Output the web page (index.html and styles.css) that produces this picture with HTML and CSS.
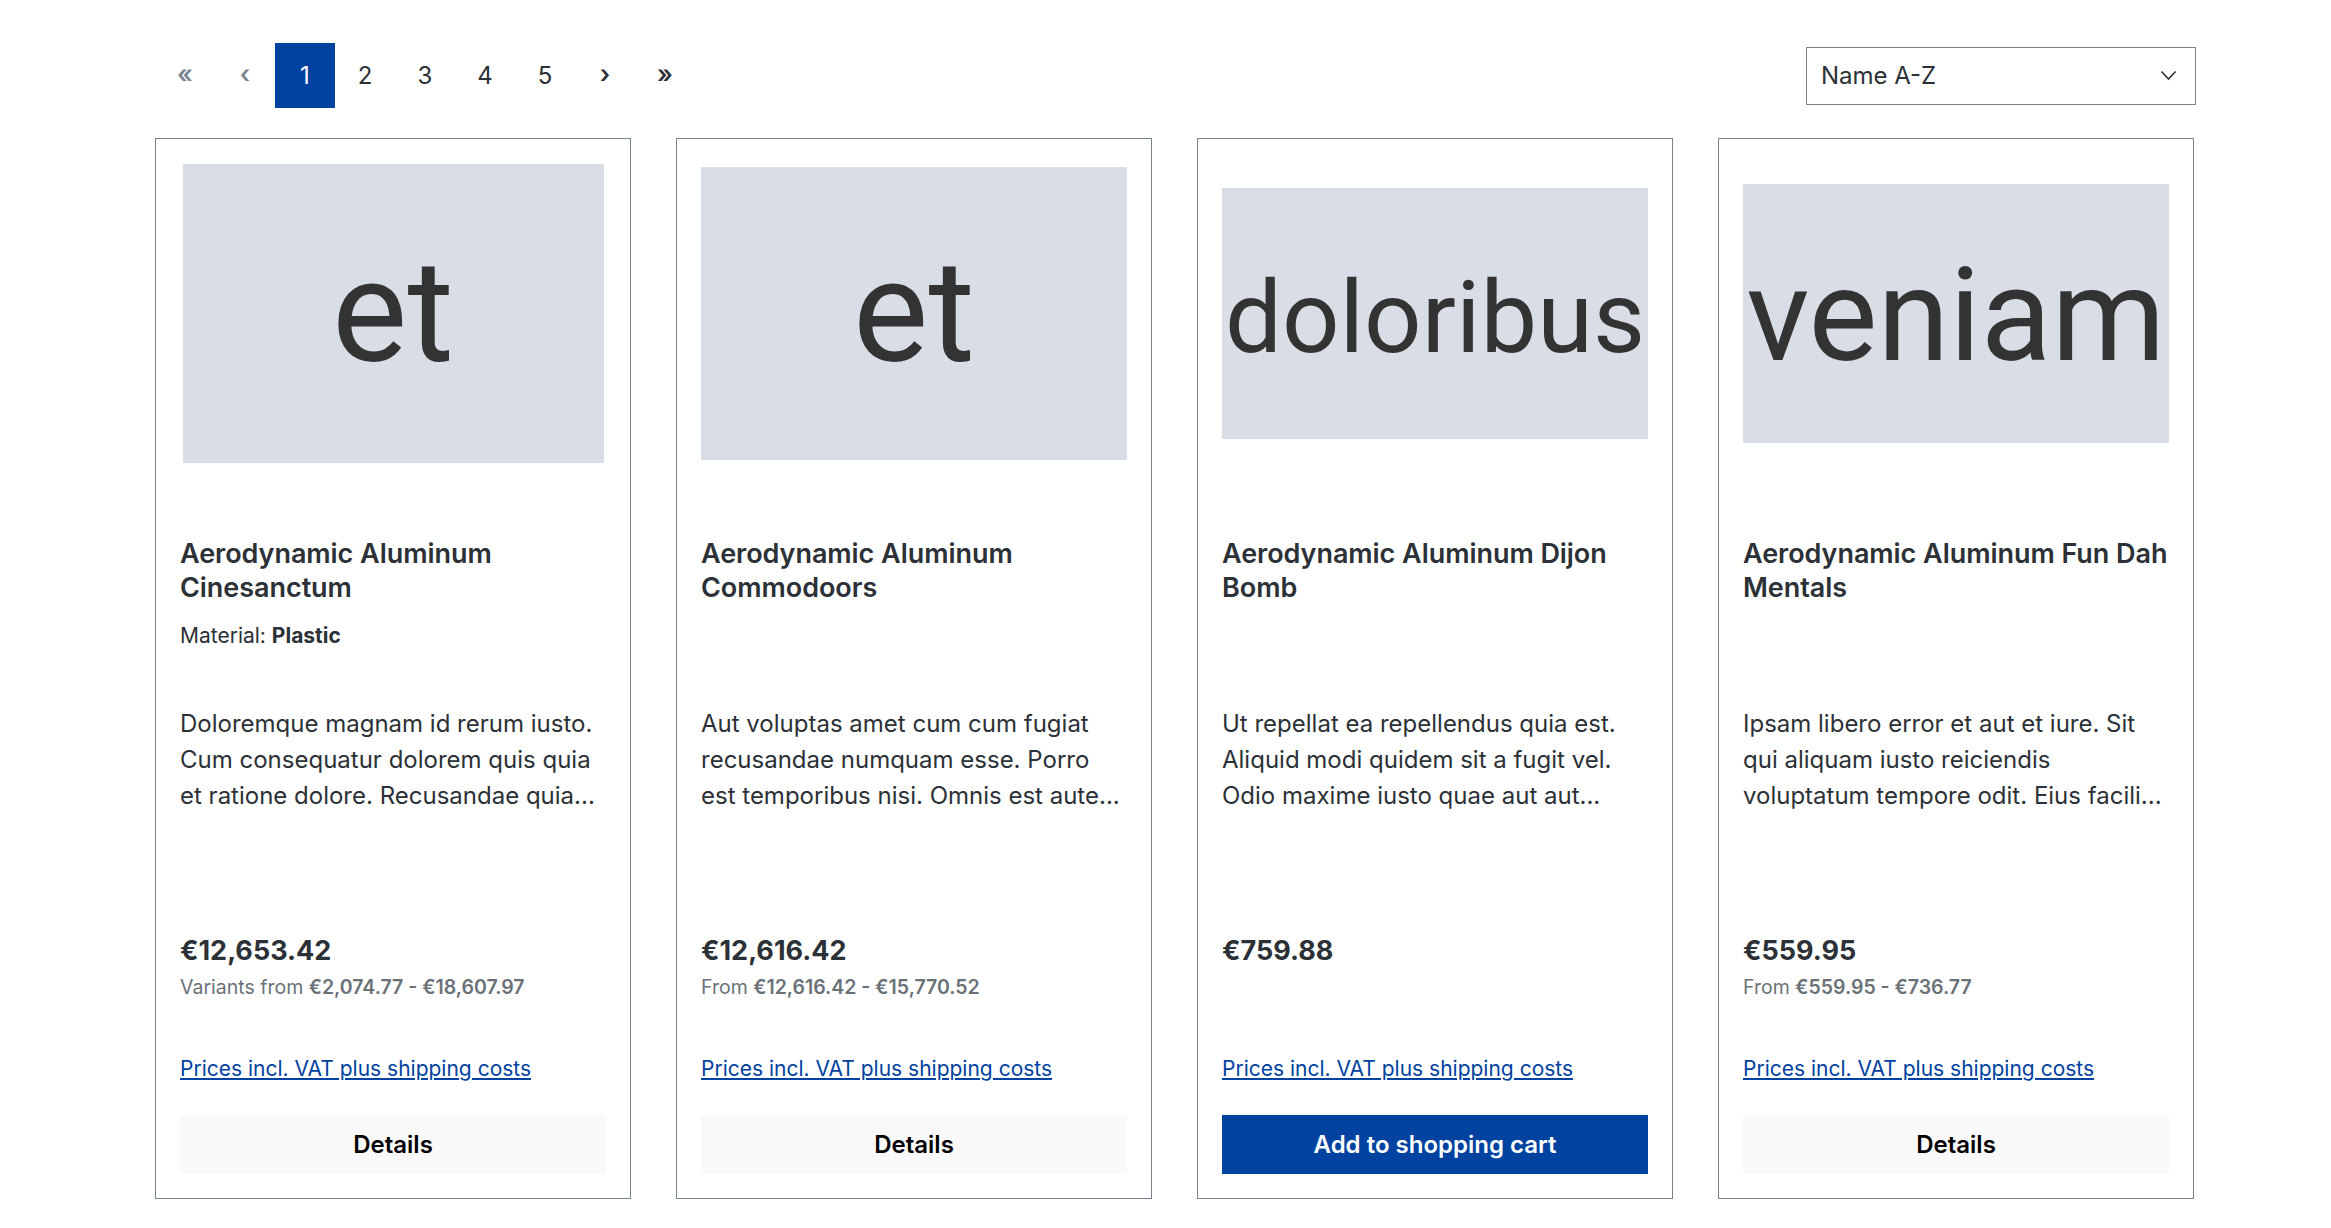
FILE: index.html
```html
<!DOCTYPE html>
<html lang="en">
<head>
<meta charset="utf-8">
<title>Product listing</title>
<link rel="stylesheet" href="styles.css">
</head>
<body>
<div class="page">
  <div class="toolbar">
    <nav class="pagination">
      <span class="pg pg-arrow pg-disabled">«</span>
      <span class="pg pg-arrow pg-disabled">‹</span>
      <span class="pg pg-active">1</span>
      <span class="pg">2</span>
      <span class="pg">3</span>
      <span class="pg">4</span>
      <span class="pg">5</span>
      <span class="pg pg-arrow">›</span>
      <span class="pg pg-arrow">»</span>
    </nav>
    <div class="sort">
      <span class="sort-label">Name A-Z</span>
      <svg class="sort-chevron" width="17" height="11" viewBox="0 0 17 11"><polyline points="1.5,1.5 8.5,9 15.5,1.5" fill="none" stroke="#2b3136" stroke-width="1.6"/></svg>
    </div>
  </div>

  <div class="grid">
    <div class="card">
      <div class="img-wrap"><div class="img img-1">et</div></div>
      <div class="name">Aerodynamic Aluminum Cinesanctum</div>
      <div class="chars"><div class="char-line">Material: <b>Plastic</b></div></div>
      <div class="desc">Doloremque magnam id rerum iusto. Cum consequatur dolorem quis quia et ratione dolore. Recusandae quia...</div>
      <div class="price-block">
        <div class="price">€12,653.42</div>
        <div class="variants">Variants from <b>€2,074.77 - €18,607.97</b></div>
      </div>
      <a class="vat" href="#">Prices incl. VAT plus shipping costs</a>
      <div class="btn btn-light">Details</div>
    </div>

    <div class="card">
      <div class="img-wrap"><div class="img img-2">et</div></div>
      <div class="name">Aerodynamic Aluminum Commodoors</div>
      <div class="chars"></div>
      <div class="desc">Aut voluptas amet cum cum fugiat recusandae numquam esse. Porro est temporibus nisi. Omnis est aute...</div>
      <div class="price-block">
        <div class="price">€12,616.42</div>
        <div class="variants">From <b>€12,616.42 - €15,770.52</b></div>
      </div>
      <a class="vat" href="#">Prices incl. VAT plus shipping costs</a>
      <div class="btn btn-light">Details</div>
    </div>

    <div class="card">
      <div class="img-wrap"><div class="img img-3">doloribus</div></div>
      <div class="name">Aerodynamic Aluminum Dijon Bomb</div>
      <div class="chars"></div>
      <div class="desc">Ut repellat ea repellendus quia est. Aliquid modi quidem sit a fugit vel. Odio maxime iusto quae aut aut...</div>
      <div class="price-block">
        <div class="price">€759.88</div>
      </div>
      <a class="vat" href="#">Prices incl. VAT plus shipping costs</a>
      <div class="btn btn-primary">Add to shopping cart</div>
    </div>

    <div class="card">
      <div class="img-wrap"><div class="img img-4">veniam</div></div>
      <div class="name">Aerodynamic Aluminum Fun Dah Mentals</div>
      <div class="chars"></div>
      <div class="desc">Ipsam libero error et aut et iure. Sit qui aliquam iusto reiciendis voluptatum tempore odit. Eius facili...</div>
      <div class="price-block">
        <div class="price">€559.95</div>
        <div class="variants">From <b>€559.95 - €736.77</b></div>
      </div>
      <a class="vat" href="#">Prices incl. VAT plus shipping costs</a>
      <div class="btn btn-light">Details</div>
    </div>
  </div>
</div>
</body>
</html>
```

FILE: styles.css
```css
* { box-sizing: border-box; }

html, body {
  margin: 0;
  padding: 0;
  background: #ffffff;
}

body {
  font-family: Inter, "Noto Sans", "Liberation Sans", sans-serif;
  color: #2b3136;
}

.page {
  width: 2196px;
  padding-left: 155px;
  padding-top: 43px;
}

/* Toolbar */
.toolbar {
  display: flex;
  align-items: center;
  justify-content: space-between;
  height: 65px;
}

.pagination {
  display: flex;
  height: 65px;
}

.pg {
  width: 60px;
  height: 65px;
  display: flex;
  align-items: center;
  justify-content: center;
  font-size: 24px;
  color: #2b3136;
}

.pg-arrow {
  font-weight: 600;
  font-size: 25px;
  padding-bottom: 3px;
}

.pg-disabled {
  color: #798490;
}

.pg-active {
  background: #0042a0;
  color: #ffffff;
}

.sort {
  width: 390px;
  height: 58px;
  border: 1px solid #798490;
  display: flex;
  align-items: center;
  justify-content: space-between;
  padding: 0 18px 0 14px;
  font-size: 24px;
  color: #2b3136;
}

.sort-chevron {
  display: block;
}

/* Grid */
.grid {
  display: grid;
  grid-template-columns: repeat(4, 476px);
  column-gap: 45px;
  margin-top: 30px;
}

.card {
  border: 1px solid #798490;
  padding: 24px;
  display: flex;
  flex-direction: column;
}

.img-wrap {
  height: 300px;
  display: flex;
  align-items: center;
  justify-content: center;
}

.img {
  background: #d9dde6;
  display: flex;
  align-items: center;
  justify-content: center;
  font-family: Roboto, "Liberation Sans", sans-serif;
  color: #333333;
  line-height: 1;
  flex: none;
}

.img-1 { width: 421px; height: 299px; font-size: 142px; }
.img-2 { width: 426px; height: 293px; font-size: 142px; }
.img-3 { width: 426px; height: 251px; font-size: 101px; padding-top: 8px; }
.img-4 { width: 426px; height: 259px; font-size: 130px; padding-top: 6px; }

.name {
  margin-top: 74px;
  margin-right: -8px;
  height: 68px;
  font-size: 27px;
  line-height: 33.75px;
  font-weight: 600;
  letter-spacing: -0.05px;
  color: #2b3136;
  overflow: hidden;
}

.chars {
  height: 101px;
  padding-top: 16px;
}

.char-line {
  font-size: 21px;
  line-height: 30px;
}

.char-line b {
  font-weight: 700;
}

.desc {
  height: 108px;
  font-size: 24px;
  line-height: 36px;
  overflow: hidden;
  display: -webkit-box;
  -webkit-line-clamp: 3;
  -webkit-box-orient: vertical;
}

.price-block {
  margin-top: 117px;
  height: 122px;
}

.price {
  font-size: 27px;
  line-height: 40.5px;
  font-weight: 700;
}

.variants {
  font-size: 19.5px;
  line-height: 31px;
  color: #6a7278;
}

.variants b {
  font-weight: 600;
}

.vat {
  display: block;
  font-size: 21px;
  line-height: 31.5px;
  color: #0042a0;
  text-decoration: underline;
  text-underline-offset: 2px;
}

.btn {
  margin-top: 30px;
  height: 59px;
  display: flex;
  align-items: center;
  justify-content: center;
  font-size: 24px;
  font-weight: 600;
}

.btn-light {
  background: #f9f9f9;
  color: #000000;
}

.btn-primary {
  background: #0042a0;
  color: #ffffff;
}
```
